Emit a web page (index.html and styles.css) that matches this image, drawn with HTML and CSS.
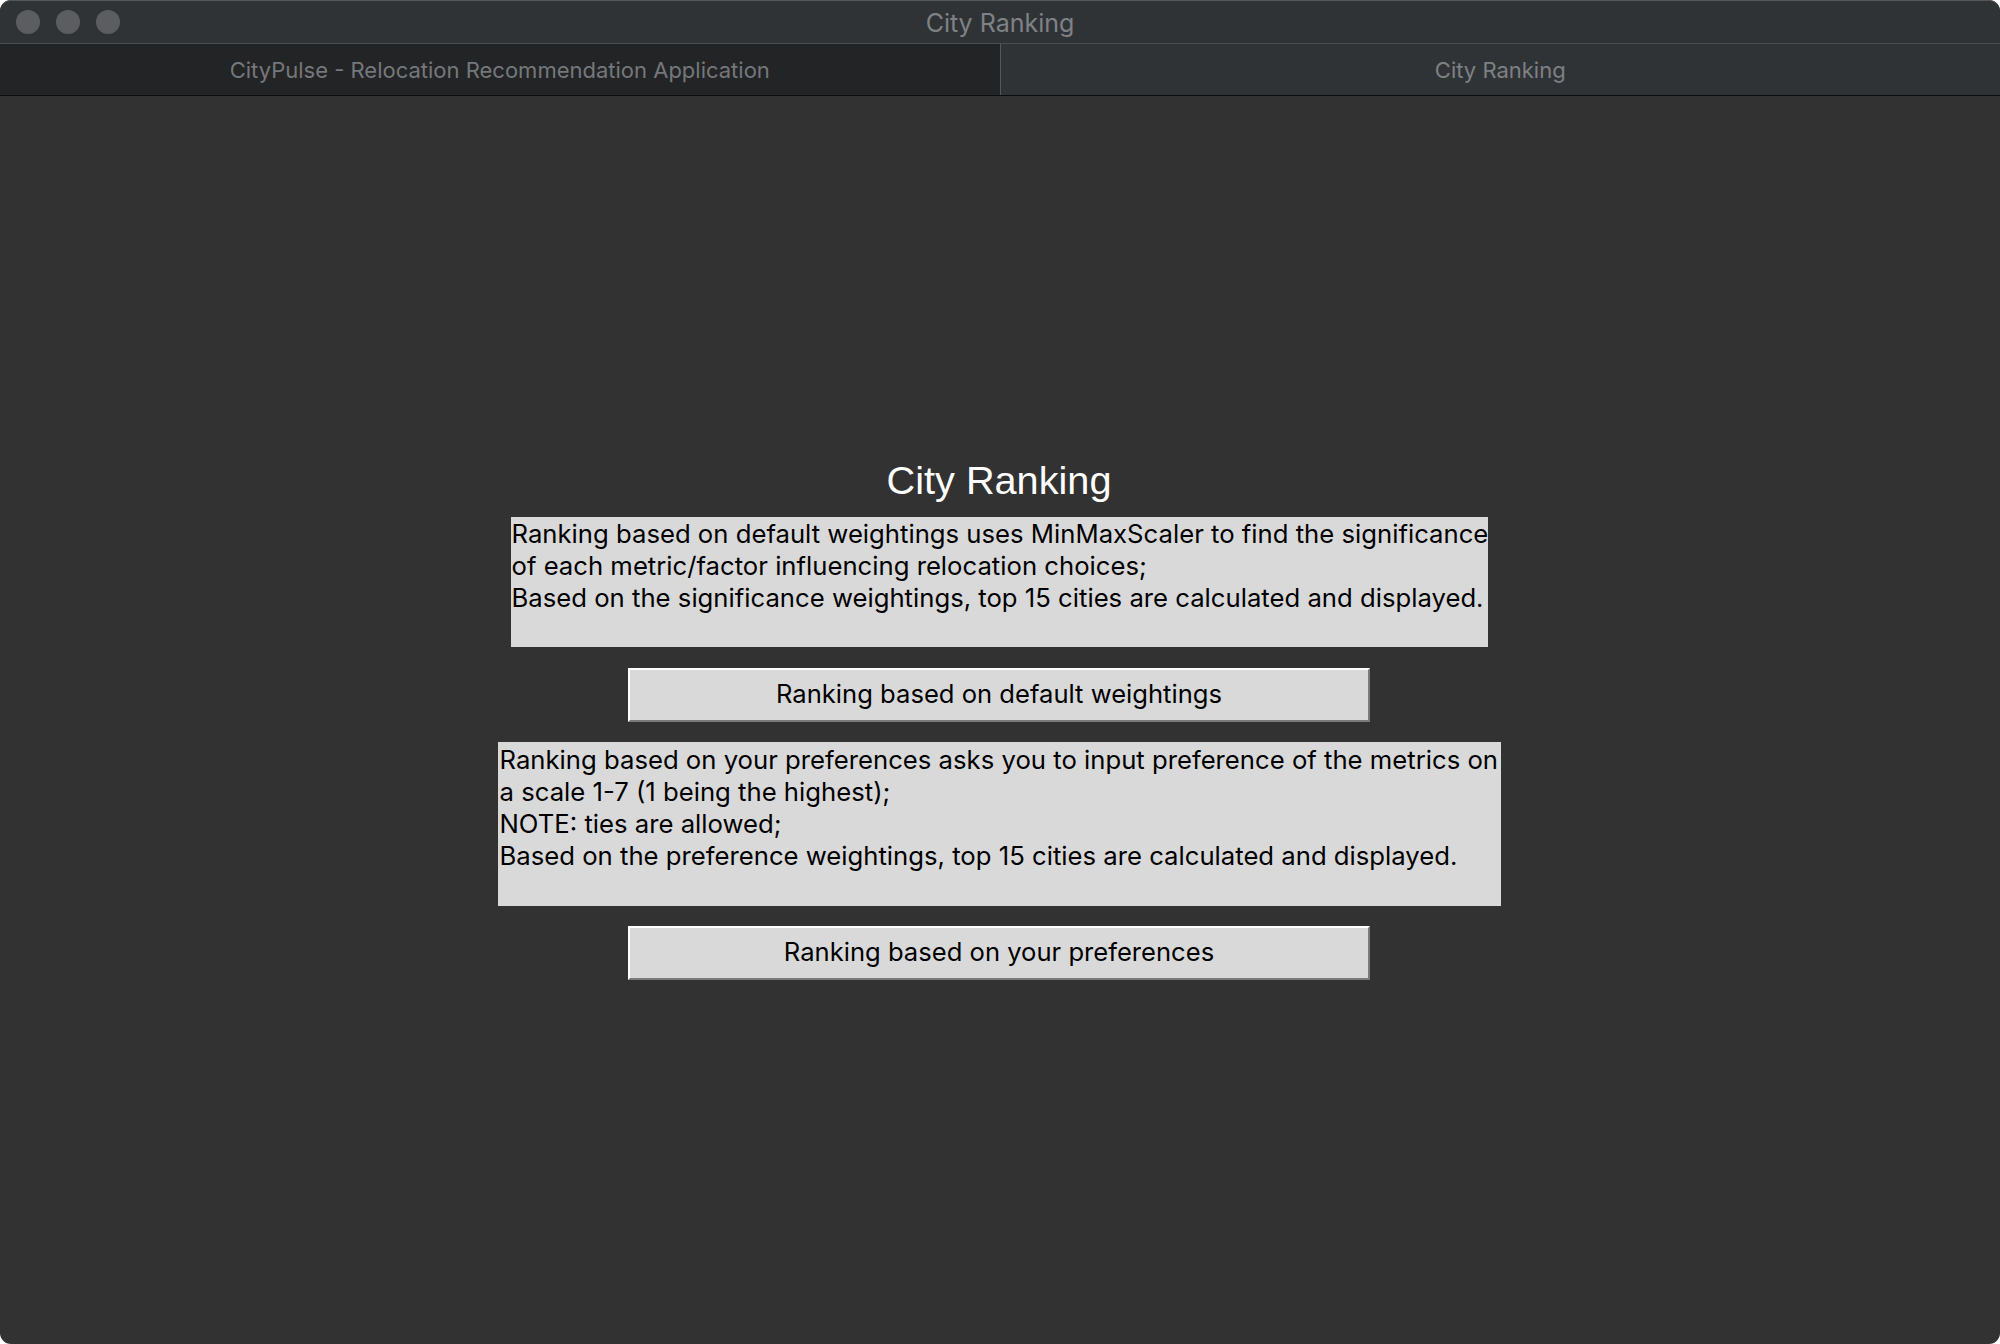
FILE: index.html
```html
<!DOCTYPE html>
<html>
<head>
<meta charset="utf-8">
<title>City Ranking</title>
<link rel="stylesheet" href="styles.css">
</head>
<body>
<div class="window">
  <div class="titlebar">
    <div class="lights">
      <span class="light"></span>
      <span class="light"></span>
      <span class="light"></span>
    </div>
    <div class="title">City Ranking</div>
    <div class="spacer"></div>
  </div>
  <div class="tabs">
    <div class="tab tab-left">CityPulse - Relocation Recommendation Application</div>
    <div class="tab tab-right">City Ranking</div>
  </div>
  <div class="content">
    <h1 class="heading">City Ranking</h1>
    <div class="desc desc-one">Ranking based on default weightings uses MinMaxScaler to find the significance
of each metric/factor influencing relocation choices;
Based on the significance weightings, top 15 cities are calculated and displayed.</div>
    <div class="btn btn-one">Ranking based on default weightings</div>
    <div class="desc desc-two">Ranking based on your preferences asks you to input preference of the metrics on
a scale 1-7 (1 being the highest);
NOTE: ties are allowed;
Based on the preference weightings, top 15 cities are calculated and displayed.</div>
    <div class="btn btn-two">Ranking based on your preferences</div>
  </div>
</div>
</body>
</html>
```

FILE: styles.css
```css
html, body {
  margin: 0;
  padding: 0;
  background: #ffffff;
}

.window {
  width: 2000px;
  height: 1344px;
  border-radius: 11px;
  overflow: hidden;
  background: #323232;
  display: flex;
  flex-direction: column;
}

.titlebar {
  height: 42px;
  border-top: 1px solid #55585b;
  border-bottom: 1px solid #4c4f52;
  background: #303336;
  display: grid;
  grid-template-columns: 1fr auto 1fr;
  align-items: center;
  border-radius: 11px 11px 0 0;
}

.lights {
  display: flex;
  gap: 16px;
  padding-left: 16px;
}

.light {
  width: 24px;
  height: 24px;
  border-radius: 50%;
  background: #5b5d60;
}

.title {
  font-family: Inter, "Liberation Sans", sans-serif;
  font-size: 25px;
  color: #7f8285;
  padding-top: 2px;
}

.tabs {
  height: 51px;
  display: flex;
  border-bottom: 1px solid #0d0d0d;
}

.tab {
  flex: 1;
  display: flex;
  align-items: center;
  justify-content: center;
  font-family: Inter, "Liberation Sans", sans-serif;
  font-size: 22px;
  color: #75787b;
}

.tab-left {
  background: #232426;
  border-right: 1px solid #55585b;
}

.tab-right {
  background: #303336;
  color: #7e8184;
}

.content {
  flex: 1;
  display: flex;
  flex-direction: column;
  align-items: center;
  justify-content: center;
  padding-right: 2px;
  padding-bottom: 3px;
}

.heading {
  margin: 0 0 15px 0;
  font-family: "Liberation Sans", Arial, sans-serif;
  font-weight: normal;
  font-size: 39.7px;
  line-height: 44px;
  color: #ffffff;
}

.desc {
  background: #d9d9d9;
  color: #000000;
  font-family: Inter, "Liberation Sans", sans-serif;
  font-size: 25.7px;
  line-height: 32px;
  white-space: pre;
  box-sizing: border-box;
}

.desc-one {
  width: 977px;
  padding: 1px 1px 33px 1px;
}

.desc-two {
  width: 1003px;
  padding: 2px 2px 34px 2px;
}

.btn {
  width: 742px;
  height: 54px;
  box-sizing: border-box;
  background: #d9d9d9;
  border-top: 2px solid #ffffff;
  border-left: 2px solid #ffffff;
  border-bottom: 2px solid #7a7a7a;
  border-right: 2px solid #7a7a7a;
  display: flex;
  align-items: center;
  justify-content: center;
  padding-bottom: 2px;
  font-family: Inter, "Liberation Sans", sans-serif;
  font-size: 25.6px;
  color: #000000;
}

.btn-one {
  margin: 21px 0 20px 0;
}

.btn-two {
  margin-top: 20px;
}
```
